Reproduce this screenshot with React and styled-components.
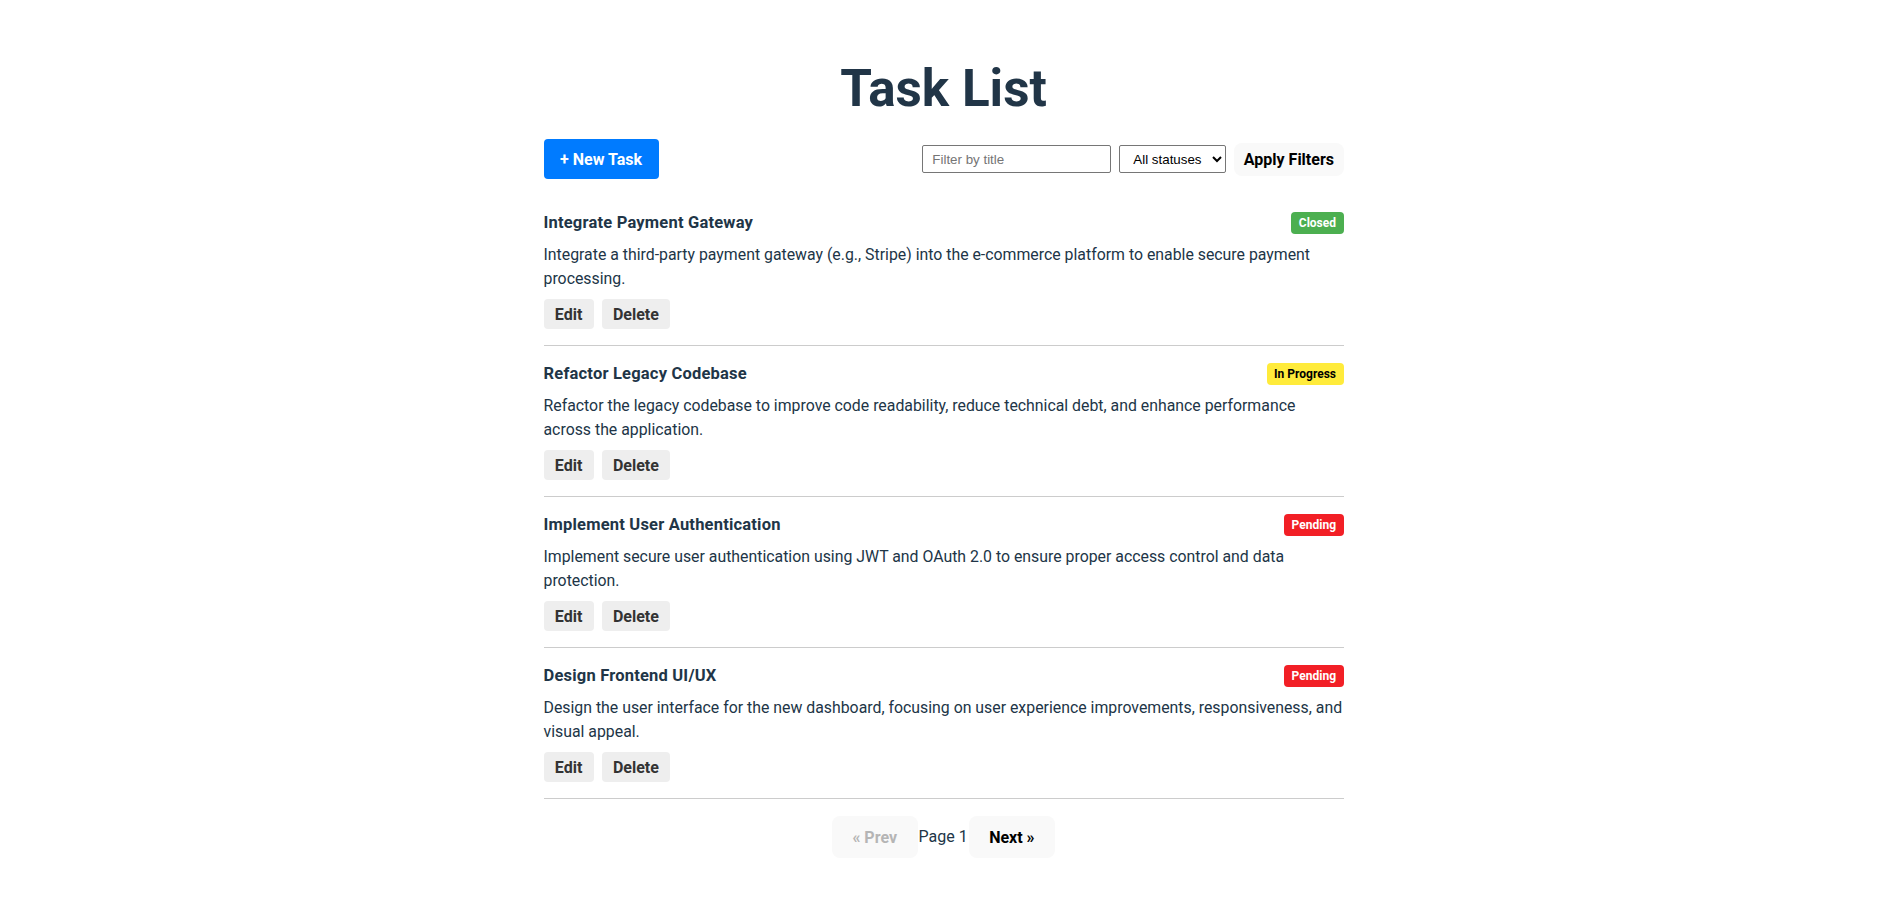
import React from 'react';
import styled, { createGlobalStyle, css } from 'styled-components';

const GlobalStyle = createGlobalStyle`
  body {
    margin: 0;
    padding-right: 7px;
    background: #fff;
    color: #213547;
    font-family: Roboto, "Noto Sans", sans-serif;
    font-size: 16px;
    line-height: 1.5;
  }
`;

const Page = styled.main`
  max-width: 800px;
  margin: 0 auto;
  padding: 61px 0 40px;
`;

const Title = styled.h1`
  margin: 0 0 22px;
  font-size: 51.2px;
  line-height: 1.1;
  font-weight: 700;
  text-align: center;
  color: #213547;
`;

const Toolbar = styled.div`
  display: flex;
  justify-content: space-between;
  align-items: center;
  margin-bottom: 16px;
`;

const PrimaryButton = styled.button`
  height: 40px;
  padding: 0 16.5px;
  border: none;
  border-radius: 4px;
  background: #007bff;
  color: #fff;
  font-family: inherit;
  font-size: 16px;
  font-weight: 700;
  cursor: pointer;
`;

const Filters = styled.form`
  display: flex;
  align-items: center;
  gap: 8px;
`;

const fieldBase = css`
  box-sizing: border-box;
  height: 28px;
  border: 1px solid #767676;
  border-radius: 2px;
  background: #fff;
  color: #000;
  font-family: "Liberation Sans", Arial, sans-serif;
  font-size: 13.33px;
`;

const TextInput = styled.input`
  ${fieldBase}
  width: 189px;
  padding: 4px 9px;

  &::placeholder {
    color: #757575;
  }
`;

const Select = styled.select`
  ${fieldBase}
  width: 107px;
  padding: 0 4px 0 9px;
`;

const SoftButton = styled.button`
  box-sizing: border-box;
  height: ${({ $compact }) => ($compact ? '33px' : '42px')};
  padding: ${({ $compact }) => ($compact ? '0 8.5px' : '0 19.5px')};
  border: 1px solid transparent;
  border-radius: 8px;
  background: #f9f9f9;
  color: ${({ disabled }) => (disabled ? '#b5b5b5' : '#000')};
  font-family: inherit;
  font-size: 16px;
  font-weight: 700;
  cursor: ${({ disabled }) => (disabled ? 'default' : 'pointer')};
`;

const TaskList = styled.ul`
  list-style: none;
  margin: 0;
  padding: 0;
`;

const TaskItem = styled.li`
  padding: 16px 0;
  border-bottom: 1px solid #ccc;
`;

const TaskHeader = styled.div`
  display: flex;
  justify-content: space-between;
  align-items: center;
`;

const TaskTitle = styled.h3`
  margin: 0;
  font-size: 16.5px;
  font-weight: 700;
  line-height: 24px;
  letter-spacing: 0.2px;
`;

const badgeColors = {
  Closed: { bg: '#4caf50', fg: '#fff' },
  'In Progress': { bg: '#ffeb3b', fg: '#000' },
  Pending: { bg: '#f21f26', fg: '#fff' },
};

const StatusBadge = styled.span`
  display: inline-block;
  padding: 4px 7.5px;
  border-radius: 4px;
  font-size: 12px;
  font-weight: 700;
  line-height: 14px;
  background: ${({ $status }) => badgeColors[$status].bg};
  color: ${({ $status }) => badgeColors[$status].fg};
`;

const Description = styled.p`
  margin: 8px 0;
  font-size: 15.85px;
  line-height: 24px;
`;

const Actions = styled.div`
  display: flex;
  gap: 8px;
`;

const SmallButton = styled.button`
  height: 30px;
  padding: 0 11.3px;
  border: none;
  border-radius: 4px;
  background: #eee;
  color: #333;
  font-family: inherit;
  font-size: 16px;
  font-weight: 700;
  cursor: pointer;
`;

const Pagination = styled.nav`
  display: flex;
  justify-content: center;
  align-items: center;
  gap: 1px;
  margin-top: 17px;
`;

const PageLabel = styled.span`
  font-size: 16px;
`;

const tasks = [
  {
    id: 1,
    title: 'Integrate Payment Gateway',
    status: 'Closed',
    description:
      'Integrate a third-party payment gateway (e.g., Stripe) into the e-commerce platform to enable secure payment processing.',
  },
  {
    id: 2,
    title: 'Refactor Legacy Codebase',
    status: 'In Progress',
    description:
      'Refactor the legacy codebase to improve code readability, reduce technical debt, and enhance performance across the application.',
  },
  {
    id: 3,
    title: 'Implement User Authentication',
    status: 'Pending',
    description:
      'Implement secure user authentication using JWT and OAuth 2.0 to ensure proper access control and data protection.',
  },
  {
    id: 4,
    title: 'Design Frontend UI/UX',
    status: 'Pending',
    description:
      'Design the user interface for the new dashboard, focusing on user experience improvements, responsiveness, and visual appeal.',
  },
];

export default function App() {
  return (
    <>
      <GlobalStyle />
      <Page>
        <Title>Task List</Title>

        <Toolbar>
          <PrimaryButton type="button">+ New Task</PrimaryButton>
          <Filters onSubmit={(e) => e.preventDefault()}>
            <TextInput type="text" placeholder="Filter by title" />
            <Select defaultValue="">
              <option value="">All statuses</option>
              <option value="Pending">Pending</option>
              <option value="In Progress">In Progress</option>
              <option value="Closed">Closed</option>
            </Select>
            <SoftButton type="submit" $compact>
              Apply Filters
            </SoftButton>
          </Filters>
        </Toolbar>

        <TaskList>
          {tasks.map((task) => (
            <TaskItem key={task.id}>
              <TaskHeader>
                <TaskTitle>{task.title}</TaskTitle>
                <StatusBadge $status={task.status}>{task.status}</StatusBadge>
              </TaskHeader>
              <Description>{task.description}</Description>
              <Actions>
                <SmallButton type="button">Edit</SmallButton>
                <SmallButton type="button">Delete</SmallButton>
              </Actions>
            </TaskItem>
          ))}
        </TaskList>

        <Pagination>
          <SoftButton type="button" disabled>
            « Prev
          </SoftButton>
          <PageLabel>Page 1</PageLabel>
          <SoftButton type="button">Next »</SoftButton>
        </Pagination>
      </Page>
    </>
  );
}
